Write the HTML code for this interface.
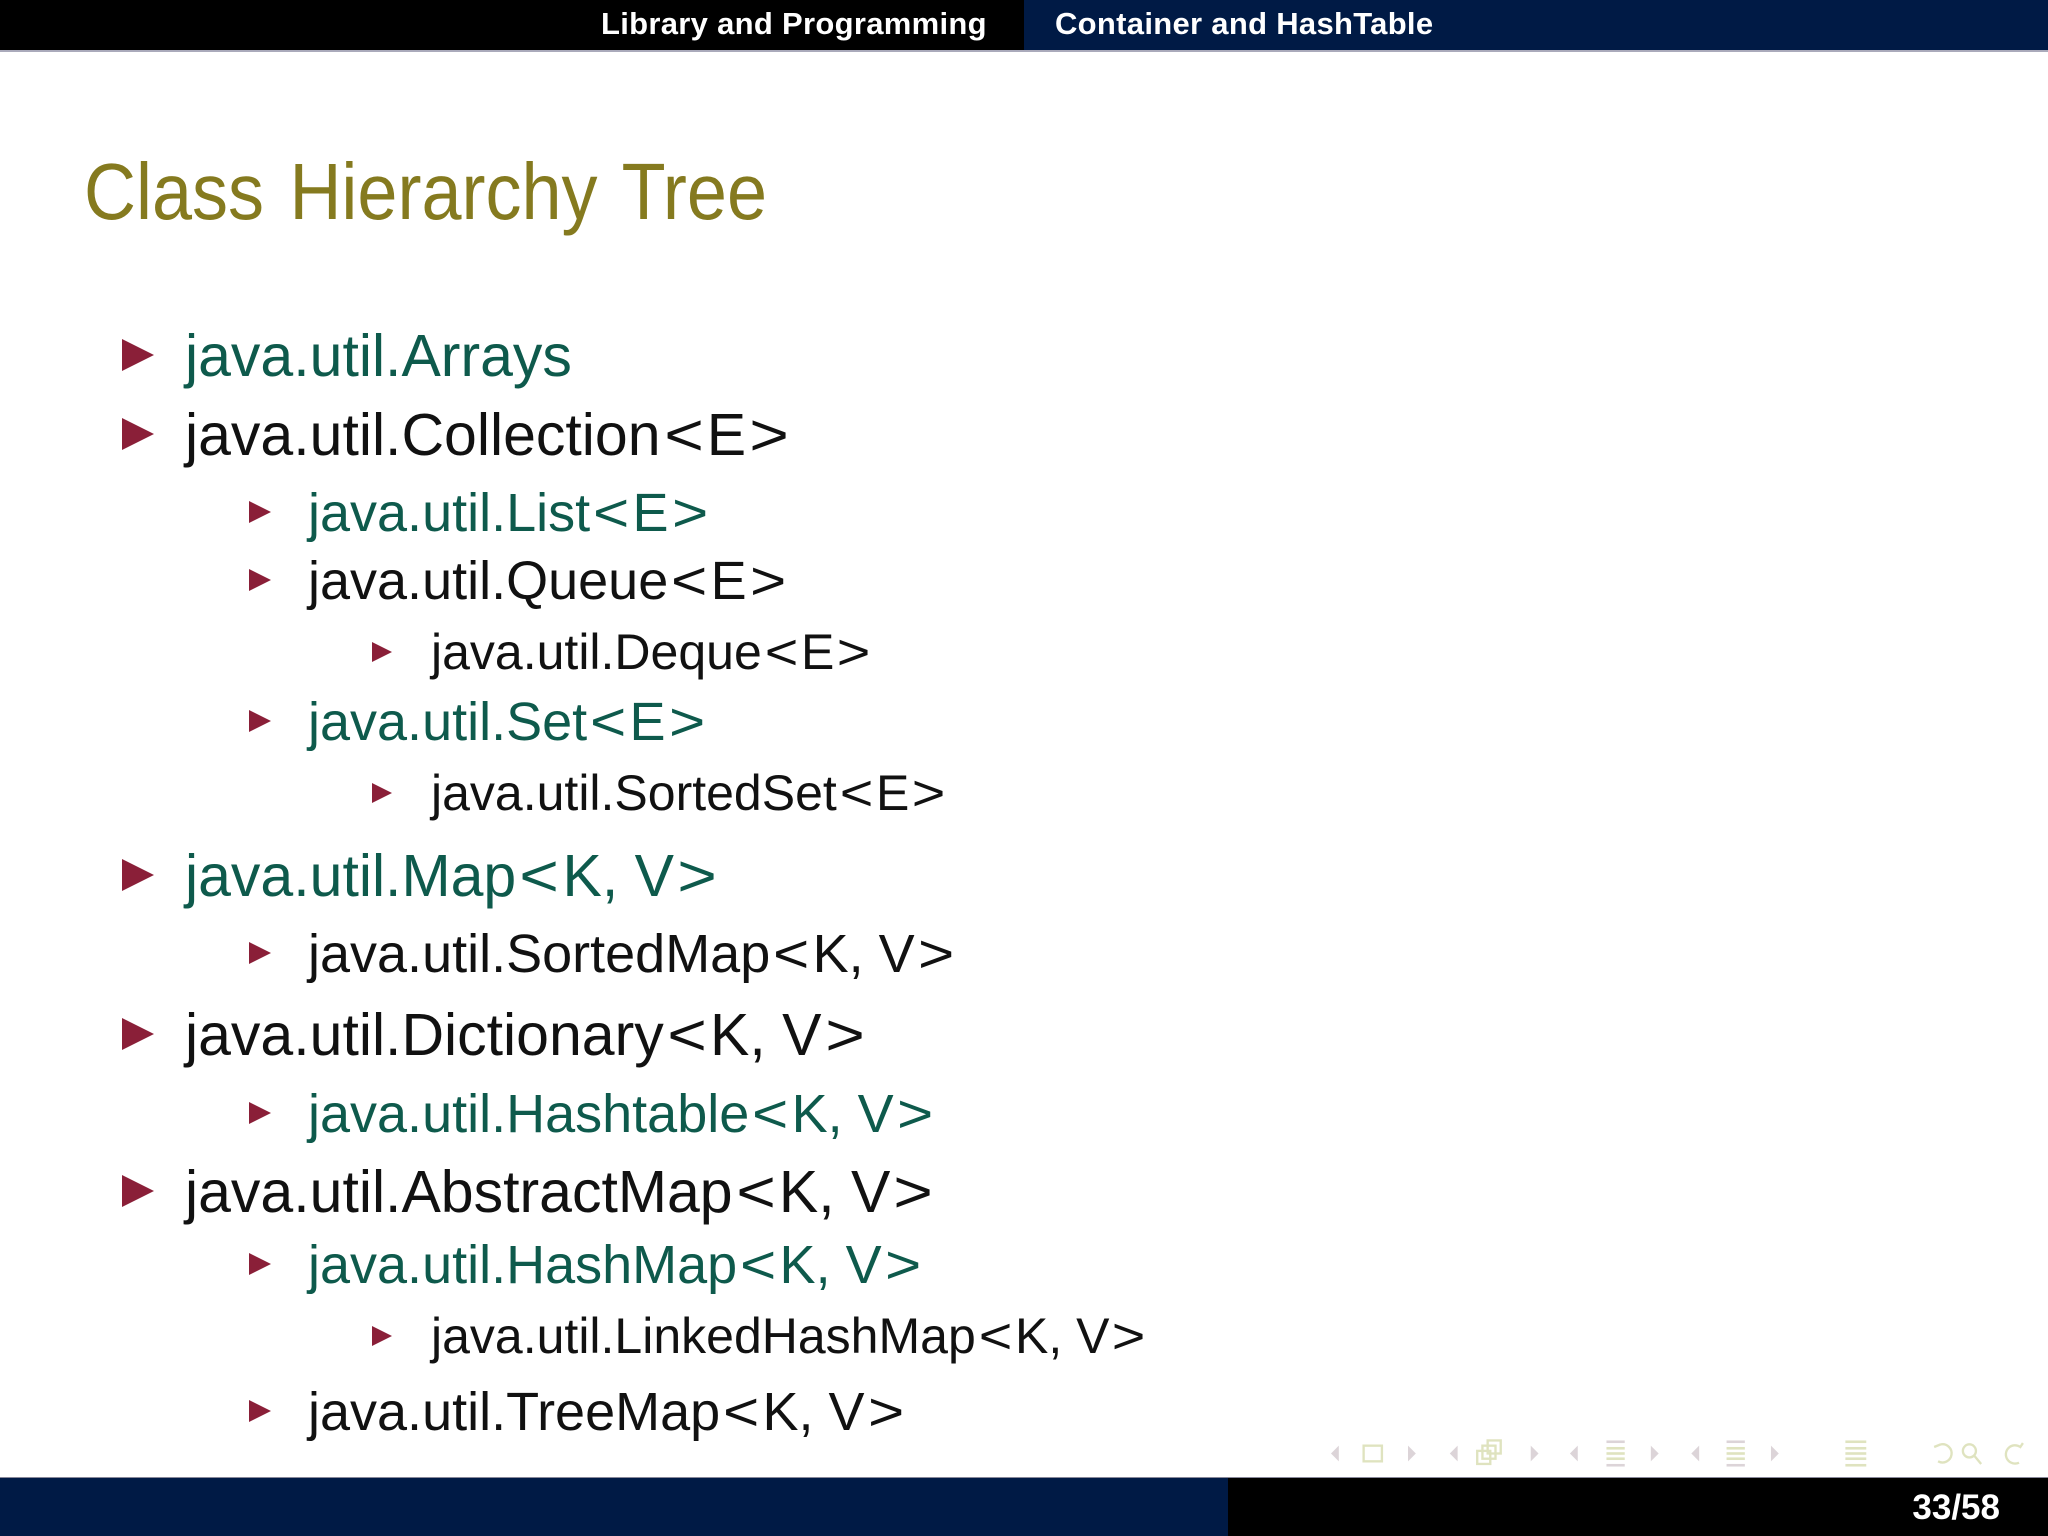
<!DOCTYPE html>
<html><head><meta charset="utf-8"><style>
body{margin:0;width:2048px;height:1536px;position:relative;background:#fff;overflow:hidden;font-family:"Liberation Sans",sans-serif}
.t{position:absolute;white-space:nowrap;line-height:1}
.g{color:#0e5a4c}.k{color:#111}
.b{display:inline-block;padding:0 0.1em;transform:scaleX(1.15)}
.tri{position:absolute;width:0;height:0;border-style:solid;border-color:transparent transparent transparent #8a1f38}
</style></head><body>
<div style="position:absolute;left:0;top:0;width:1024px;height:50px;background:#000"></div>
<div style="position:absolute;left:1024px;top:0;width:1024px;height:50px;background:#001a45"></div>
<div style="position:absolute;left:0;top:50px;width:2048px;height:2px;background:#aab"></div>
<div class="t" style="left:601px;top:8px;font-size:31px;font-weight:bold;color:#fff;letter-spacing:0.3px">Library and Programming</div>
<div class="t" style="left:1055px;top:8px;font-size:31px;font-weight:bold;color:#fff;letter-spacing:0.3px">Container and HashTable</div>
<div class="t" style="left:84px;top:152px;font-size:80px;color:#857a1f;transform:scaleX(0.9);transform-origin:0 0;word-spacing:6px">Class Hierarchy Tree</div>

<div class="tri" style="left:122px;top:339px;border-width:16px 0 16px 32px"></div>
<div class="t g" style="left:185px;top:327px;font-size:59px">java.util.Arrays</div>
<div class="tri" style="left:122px;top:418px;border-width:16px 0 16px 32px"></div>
<div class="t k" style="left:185px;top:406px;font-size:59px">java.util.Collection<span class="b">&lt;</span>E<span class="b">&gt;</span></div>

<div class="tri" style="left:249px;top:501px;border-width:11px 0 11px 22px"></div>
<div class="t g" style="left:308px;top:486px;font-size:54px">java.util.List<span class="b">&lt;</span>E<span class="b">&gt;</span></div>
<div class="tri" style="left:249px;top:569px;border-width:11px 0 11px 22px"></div>
<div class="t k" style="left:308px;top:554px;font-size:54px">java.util.Queue<span class="b">&lt;</span>E<span class="b">&gt;</span></div>
<div class="tri" style="left:372px;top:642px;border-width:10px 0 10px 20px"></div>
<div class="t k" style="left:431px;top:627px;font-size:50px">java.util.Deque<span class="b">&lt;</span>E<span class="b">&gt;</span></div>
<div class="tri" style="left:249px;top:710px;border-width:11px 0 11px 22px"></div>
<div class="t g" style="left:308px;top:695px;font-size:54px">java.util.Set<span class="b">&lt;</span>E<span class="b">&gt;</span></div>
<div class="tri" style="left:372px;top:783px;border-width:10px 0 10px 20px"></div>
<div class="t k" style="left:431px;top:768px;font-size:50px">java.util.SortedSet<span class="b">&lt;</span>E<span class="b">&gt;</span></div>

<div class="tri" style="left:122px;top:859px;border-width:16px 0 16px 32px"></div>
<div class="t g" style="left:185px;top:847px;font-size:59px">java.util.Map<span class="b">&lt;</span>K, V<span class="b">&gt;</span></div>
<div class="tri" style="left:249px;top:942px;border-width:11px 0 11px 22px"></div>
<div class="t k" style="left:308px;top:927px;font-size:54px">java.util.SortedMap<span class="b">&lt;</span>K, V<span class="b">&gt;</span></div>

<div class="tri" style="left:122px;top:1018px;border-width:16px 0 16px 32px"></div>
<div class="t k" style="left:185px;top:1006px;font-size:59px">java.util.Dictionary<span class="b">&lt;</span>K, V<span class="b">&gt;</span></div>
<div class="tri" style="left:249px;top:1102px;border-width:11px 0 11px 22px"></div>
<div class="t g" style="left:308px;top:1087px;font-size:54px">java.util.Hashtable<span class="b">&lt;</span>K, V<span class="b">&gt;</span></div>

<div class="tri" style="left:122px;top:1175px;border-width:16px 0 16px 32px"></div>
<div class="t k" style="left:185px;top:1163px;font-size:59px">java.util.AbstractMap<span class="b">&lt;</span>K, V<span class="b">&gt;</span></div>
<div class="tri" style="left:249px;top:1253px;border-width:11px 0 11px 22px"></div>
<div class="t g" style="left:308px;top:1238px;font-size:54px">java.util.HashMap<span class="b">&lt;</span>K, V<span class="b">&gt;</span></div>
<div class="tri" style="left:372px;top:1326px;border-width:10px 0 10px 20px"></div>
<div class="t k" style="left:431px;top:1311px;font-size:50px">java.util.LinkedHashMap<span class="b">&lt;</span>K, V<span class="b">&gt;</span></div>
<div class="tri" style="left:249px;top:1400px;border-width:11px 0 11px 22px"></div>
<div class="t k" style="left:308px;top:1385px;font-size:54px">java.util.TreeMap<span class="b">&lt;</span>K, V<span class="b">&gt;</span></div>

<svg style="position:absolute;left:1319px;top:1430px" width="712" height="47" viewBox="1010 1095 545 36">
<g fill="#dcd4d8">
<path d="M1025 1107 L1019 1113 L1025 1119Z"/><path d="M1078 1107 L1084 1113 L1078 1119Z"/>
<path d="M1116 1107 L1110 1113 L1116 1119Z"/><path d="M1172 1107 L1178 1113 L1172 1119Z"/>
<path d="M1208 1107 L1202 1113 L1208 1119Z"/><path d="M1264 1107 L1270 1113 L1264 1119Z"/>
<path d="M1301 1107 L1295 1113 L1301 1119Z"/><path d="M1356 1107 L1362 1113 L1356 1119Z"/>
<rect x="1230" y="1103" width="14" height="2"/><rect x="1230" y="1121" width="14" height="2"/>
<rect x="1322" y="1103" width="14" height="2"/><rect x="1322" y="1121" width="14" height="2"/>
</g>
<g fill="none" stroke="#dfe3bf" stroke-width="1.8">
<rect x="1044" y="1107" width="14" height="12"/>
<rect x="1131" y="1111" width="10" height="10"/><rect x="1135" y="1107" width="10" height="10"/><rect x="1139" y="1103" width="10" height="10"/>
<path d="M1486 1106 a7 7 0 1 1 -2 13 M1486 1106 l-5 2"/>
<circle cx="1508" cy="1111" r="5"/><path d="M1512 1115 l5 6"/>
<path d="M1546 1120 a7 7 0 1 1 1 -12 l2 -3"/>
</g>
<g fill="#dfe3bf">
<rect x="1230" y="1108" width="14" height="2"/><rect x="1230" y="1112" width="14" height="2"/><rect x="1230" y="1116" width="14" height="2"/>
<rect x="1322" y="1108" width="14" height="2"/><rect x="1322" y="1112" width="14" height="2"/><rect x="1322" y="1116" width="14" height="2"/>
<rect x="1413" y="1103" width="16" height="2"/><rect x="1413" y="1108" width="16" height="2"/><rect x="1413" y="1112" width="16" height="2"/><rect x="1413" y="1116" width="16" height="2"/><rect x="1413" y="1121" width="16" height="2"/>
</g>
</svg>

<div style="position:absolute;left:0;top:1478px;width:1228px;height:58px;background:#001a45"></div>
<div style="position:absolute;left:1228px;top:1478px;width:820px;height:58px;background:#000"></div>
<div style="position:absolute;left:0;top:1477px;width:2048px;height:1px;background:#889"></div>
<div class="t" style="right:48px;top:1490px;font-size:35px;font-weight:bold;color:#fff">33/58</div>
</body></html>
